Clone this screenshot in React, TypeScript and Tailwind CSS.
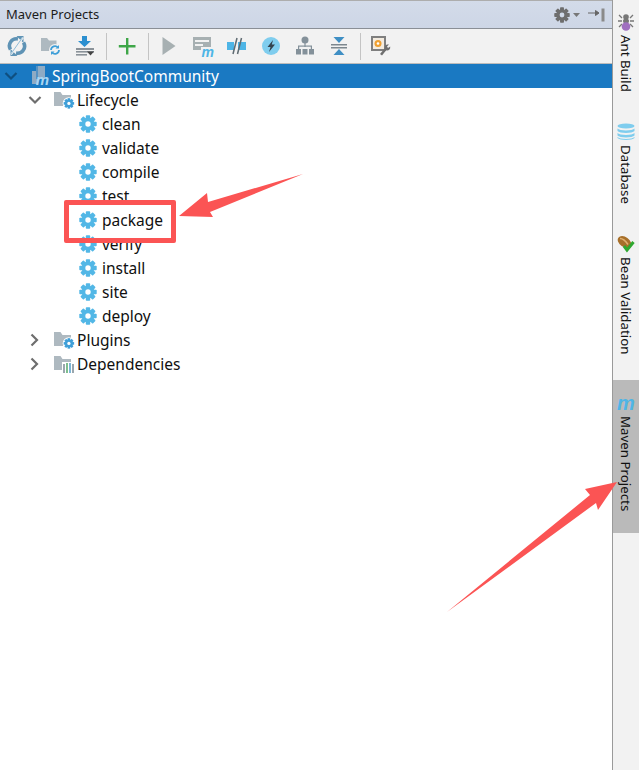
import type { ReactNode } from "react";

const FONT = "font-['Noto_Sans','Open_Sans',sans-serif]";

function Cog({ size = 18, color = "#52b7e6", hole = "#ffffff" }: { size?: number; color?: string; hole?: string }) {
  return (
    <svg width={size} height={size} viewBox="0 0 18 18" className="shrink-0">
      {[0, 45, 90, 135].map((a) => (
        <rect key={a} x="6.8" y="0.3" width="4.4" height="17.4" rx="0.8" fill={color} transform={`rotate(${a} 9 9)`} />
      ))}
      <circle cx="9" cy="9" r="6.4" fill={color} />
      <circle cx="9" cy="9" r="2.7" fill={hole} />
    </svg>
  );
}

function Folder({ children }: { children?: ReactNode }) {
  return (
    <svg width="21" height="18" viewBox="0 0 21 18" className="shrink-0">
      <path d="M0 1h6.5l2 3H17v11H0z" fill="#aeb9c0" />
      {children}
    </svg>
  );
}

function FolderCog() {
  return (
    <Folder>
      <circle cx="14.900" cy="12.400" r="6.200" fill="#fff" />
      <g transform="translate(9.5 7) scale(0.6)">
        {[0, 45, 90, 135].map((a) => (
          <rect key={a} x="6.8" y="0.3" width="4.4" height="17.4" fill="#3f9fd8" transform={`rotate(${a} 9 9)`} />
        ))}
        <circle cx="9" cy="9" r="6.4" fill="#3f9fd8" />
        <circle cx="9" cy="9" r="2.7" fill="#fff" />
      </g>
    </Folder>
  );
}

function FolderBars() {
  return (
    <Folder>
      <rect x="8" y="7" width="13" height="11" fill="#fff" />
      <rect x="9" y="9" width="2" height="9" fill="#9aa7ae" />
      <rect x="12" y="8" width="2" height="10" fill="#7fbf8e" />
      <rect x="15" y="8" width="2" height="10" fill="#7db7d8" />
      <rect x="18" y="9" width="2" height="9" fill="#9aa7ae" />
    </Folder>
  );
}

function Chevron({ open, color = "#6e6e6e" }: { open: boolean; color?: string }) {
  return (
    <svg width="14" height="14" viewBox="0 0 14 14" className="shrink-0">
      <path d={open ? "M1.5 4l5.5 5.5L12.5 4" : "M3.500 1.500L9 7l-5.500 5.500"} fill="none" stroke={color} strokeWidth="2.2" />
    </svg>
  );
}

function MavenM({ className = "", color = "#4eb5e6", size = 13 }: { className?: string; color?: string; size?: number }) {
  return (
    <span
      className={`font-['Liberation_Sans',sans-serif] font-bold italic leading-none ${className}`}
      style={{ color, fontSize: size }}
    >
      m
    </span>
  );
}

function ToolIcon({ name }: { name: string }) {
  switch (name) {
    case "refresh":
      return (
        <svg width="20" height="20" viewBox="0 0 20 20">
          <path d="M3.500 13.500A7 7 0 0 1 11 3" fill="none" stroke="#5f93b5" strokeWidth="3.600" />
          <path d="M16.500 6.500A7 7 0 0 1 9 17" fill="none" stroke="#5f93b5" strokeWidth="3.600" />
          <path d="M9.500 0h7v7zM10.500 20h-7v-7z" fill="#5f93b5" />
          <path d="M4 18.500L16 1.500" stroke="#f2f2f2" strokeWidth="2" />
          <path d="M3.500 18.500L15.500 1.500" stroke="#8fbcd8" strokeWidth="1" />
        </svg>
      );
    case "folderSync":
      return (
        <svg width="20" height="20" viewBox="0 0 20 20">
          <path d="M0 2h6l2 2.500h7.500V15H0z" fill="#aeb9c0" />
          <circle cx="14" cy="14" r="6" fill="#f2f2f2" />
          <path d="M10 14a4 4 0 0 1 7-2.500M18 14a4 4 0 0 1-7 2.500" fill="none" stroke="#3f9fd8" strokeWidth="1.8" />
          <path d="M18 9v3.500h-3.500zM10 19v-3.500h3.500z" fill="#3f9fd8" />
        </svg>
      );
    case "download":
      return (
        <svg width="20" height="20" viewBox="0 0 20 20">
          <path d="M7 0h5v5h4l-6.500 6L3 5h4z" fill="#2b8fd0" />
          <rect x="1" y="12" width="18" height="2" fill="#8a9299" />
          <rect x="1" y="15" width="18" height="1.600" fill="#8a9299" />
          <rect x="1" y="18" width="11" height="1.600" fill="#8a9299" />
          <path d="M12 15.500h7l-3.500 4z" fill="#444" />
        </svg>
      );
    case "plus":
      return (
        <svg width="18" height="18" viewBox="0 0 18 18">
          <path d="M8 1h2.400v7H17.500v2.400h-7.100v7H8v-7H.8V8H8z" fill="#3ea648" />
        </svg>
      );
    case "play":
      return (
        <svg width="16" height="20" viewBox="0 0 16 20">
          <path d="M1.500 1L14.500 10 1.500 19z" fill="#a7b0b2" />
        </svg>
      );
    case "runM":
      return (
        <span className="relative block h-[20px] w-[20px]">
          <svg width="20" height="20" viewBox="0 0 20 20" className="absolute left-0 top-0">
            <rect x="0" y="1" width="18" height="13" fill="#a7b0b2" />
            <rect x="2" y="4" width="14" height="2" fill="#f2f2f2" />
            <rect x="2" y="8" width="8" height="2" fill="#f2f2f2" />
            <rect x="8" y="11" width="12" height="9" fill="#f2f2f2" />
          </svg>
          <MavenM className="absolute bottom-[-3px] right-[-1px]" size={14} />
        </span>
      );
    case "skip":
      return (
        <svg width="20" height="20" viewBox="0 0 20 20">
          <rect x="0" y="6" width="7" height="8" fill="#4eb5e6" />
          <rect x="11" y="6" width="8" height="8" fill="#4eb5e6" />
          <path d="M6 18L10 2M10.500 18L14.500 2" stroke="#5f6b72" strokeWidth="1.500" />
        </svg>
      );
    case "bolt":
      return (
        <svg width="20" height="20" viewBox="0 0 20 20">
          <circle cx="10" cy="10" r="9" fill="#7fcdee" />
          <path d="M12 4L6.500 11h3L8 16l6-7.500h-3.200z" fill="#33424d" />
        </svg>
      );
    case "tree":
      return (
        <svg width="20" height="20" viewBox="0 0 20 20">
          <circle cx="10" cy="4" r="3.500" fill="#84919a" />
          <rect x="9.400" y="6" width="1.200" height="5" fill="#84919a" />
          <rect x="3" y="9.500" width="14" height="1.200" fill="#84919a" />
          <rect x="1" y="13" width="5" height="5.500" fill="#84919a" />
          <rect x="7.500" y="13" width="5" height="5.500" fill="#84919a" />
          <rect x="14" y="13" width="5" height="5.500" fill="#84919a" />
          <rect x="3" y="10" width="1.200" height="3" fill="#84919a" />
          <rect x="15.800" y="10" width="1.200" height="3" fill="#84919a" />
        </svg>
      );
    case "collapse":
      return (
        <svg width="18" height="20" viewBox="0 0 18 20">
          <path d="M3.500 1h11L9 7z" fill="#3f8fc4" />
          <path d="M3.500 19h11L9 13z" fill="#3f8fc4" />
          <rect x="1" y="8" width="16" height="1.500" fill="#7d878e" />
          <rect x="1" y="11" width="16" height="1.500" fill="#7d878e" />
        </svg>
      );
    default:
      return (
        <svg width="20" height="20" viewBox="0 0 20 20">
          <rect x="1" y="1" width="13" height="13" fill="#f4ece0" stroke="#7f7f7f" strokeWidth="2" />
          <circle cx="7" cy="7.500" r="3.500" fill="#f0a030" />
          <circle cx="7" cy="7.500" r="1.300" fill="#fff" />
          <path d="M9 18l5-6c-1-2 1-4 4-3.500l-2 2 1 1.500 2.200-1.500c.5 3-2 4.500-4 3.800L11 19.500z" fill="#6f6f6f" />
        </svg>
      );
  }
}

function Sep() {
  return <div className="ml-[4px] mr-[3px] h-[27px] w-px bg-[#c4c4c4]" />;
}

function Tool({ name }: { name: string }) {
  return (
    <div className="flex w-[34px] items-center justify-center">
      <ToolIcon name={name} />
    </div>
  );
}

function Phase({ label }: { label: string }) {
  return (
    <div className="flex h-[24px] items-center pl-[79px] text-[#101010]">
      <Cog />
      <span className="ml-[5px]">{label}</span>
    </div>
  );
}

function Group({ open, label, icon }: { open: boolean; label: string; icon: ReactNode }) {
  return (
    <div className="flex h-[24px] items-center pl-[28px] text-[#101010]">
      <Chevron open={open} />
      <span className="ml-[12px] flex">{icon}</span>
      <span className="ml-[2px]">{label}</span>
    </div>
  );
}

function SideTab({ label, icon, active, className }: { label: string; icon: ReactNode; active?: boolean; className: string }) {
  return (
    <div className={`flex w-full flex-col items-center ${active ? "bg-[#bababa]" : ""} ${className}`}>
      <div className="flex h-[18px] items-center justify-center">{icon}</div>
      <span className="mt-[4px] text-[13.3px] leading-[18px] text-[#111] [writing-mode:vertical-rl]">{label}</span>
    </div>
  );
}

const AntIcon = (
  <svg width="16" height="18" viewBox="0 0 16 18">
    <path d="M1 2l3 3M15 2l-3 3M0 8h4M16 8h-4M1 14l3-3M15 14l-3-3" stroke="#777" strokeWidth="1.300" />
    <circle cx="8" cy="4" r="2.800" fill="#777" />
    <ellipse cx="8" cy="8" rx="3" ry="2.500" fill="#777" />
    <ellipse cx="8" cy="13.500" rx="4.300" ry="4.300" fill="#a070c0" />
  </svg>
);

const DbIcon = (
  <svg width="18" height="18" viewBox="0 0 18 18">
    <ellipse cx="9" cy="3" rx="8.500" ry="2.600" fill="#7fcdee" />
    <path d="M.5 5.500c2 2.500 15 2.500 17 0V8c-2 2.500-15 2.500-17 0z" fill="#7fcdee" />
    <path d="M.5 10c2 2.500 15 2.500 17 0v2.500c-2 2.500-15 2.500-17 0z" fill="#7fcdee" />
    <path d="M.5 14c2 2.500 15 2.500 17 0v1c-2 2.500-15 2.500-17 0z" fill="#7fcdee" />
  </svg>
);

const BeanIcon = (
  <svg width="18" height="18" viewBox="0 0 18 18">
    <ellipse cx="7.500" cy="7" rx="7.500" ry="5" transform="rotate(35 7.500 7)" fill="#a8702a" />
    <path d="M3 3.500c3 0 6 3 8 6" fill="none" stroke="#e0b070" strokeWidth="1.500" />
    <path d="M7 11l3 4 6.500-8" fill="none" stroke="#2fa82f" strokeWidth="3" />
  </svg>
);

export default function App() {
  return (
    <div className={`relative flex h-[770px] w-[639px] overflow-hidden bg-white text-[15.5px] ${FONT}`}>
      <div className="flex min-w-0 flex-1 flex-col">
        <div className="flex h-[29px] items-center justify-between border-y-[1px] border-t-[#adadad] border-b-[#8a8f96] bg-gradient-to-b from-[#d3dbe9] to-[#cdd6e6] pl-[6px] pr-[6px]">
          <span className="text-[13px] text-[#1c1c1c]">Maven Projects</span>
          <div className="flex items-center">
            <Cog size={16} color="#6e6e6e" hole="#d0d9e8" />
            <svg width="9" height="6" viewBox="0 0 9 6" className="ml-[2px] mr-[7px]">
              <path d="M1 1h7L4.500 5z" fill="#777" />
            </svg>
            <svg width="18" height="14" viewBox="0 0 18 14">
              <path d="M0 5h10M7.500 2.500L11 5 7.500 7.500z" stroke="#666" fill="#666" strokeWidth="1" />
              <rect x="13.500" y="0.500" width="3" height="13" fill="#8a8a8a" />
            </svg>
          </div>
        </div>

        <div className="flex h-[35px] items-center border-b-[1px] border-[#bcbcbc] bg-[#f2f2f2]">
          <Tool name="refresh" />
          <Tool name="folderSync" />
          <Tool name="download" />
          <Sep />
          <Tool name="plus" />
          <Sep />
          <Tool name="play" />
          <Tool name="runM" />
          <Tool name="skip" />
          <Tool name="bolt" />
          <Tool name="tree" />
          <Tool name="collapse" />
          <Sep />
          <Tool name="settings" />
        </div>

        <div className="leading-[24px]">
          <div className="flex h-[24px] items-center bg-[#1a79c2] pl-[4px] text-white">
            <Chevron open color="#0f4f80" />
            <span className="relative ml-[14px] block h-[20px] w-[18px]">
              <svg width="13" height="18" viewBox="0 0 13 18" className="absolute left-0 top-0">
                <path d="M0 5h4V0h9v13H6v5H0z" fill="#8fabc4" />
                <path d="M5 0v13" stroke="#1a79c2" strokeWidth="1" />
              </svg>
              <MavenM className="absolute bottom-[-1px] right-[1px]" color="#a9d6f2" size={15} />
            </span>
            <span className="ml-[2px]">SpringBootCommunity</span>
          </div>
          <Group open label="Lifecycle" icon={<FolderCog />} />
          {["clean", "validate", "compile", "test", "package", "verify", "install", "site", "deploy"].map((p) => (
            <Phase key={p} label={p} />
          ))}
          <Group open={false} label="Plugins" icon={<FolderCog />} />
          <Group open={false} label="Dependencies" icon={<FolderBars />} />
        </div>
      </div>

      <div className="flex h-full w-[27px] shrink-0 flex-col border-l-[1px] border-[#9a9a9a] bg-[#f2f2f2]">
        <SideTab label="Ant Build" icon={AntIcon} className="mt-[13px]" />
        <SideTab label="Database" icon={DbIcon} className="mt-[31px]" />
        <SideTab label="Bean Validation" icon={BeanIcon} className="mt-[31px]" />
        <SideTab label="Maven Projects" icon={<MavenM size={20} />} active className="mt-[26px] h-[153px] pt-[14px]" />
      </div>

      {/* red annotations drawn over the panel */}
      <div className="absolute left-[64px] top-[200px] h-[43px] w-[112px] rounded-[2px] border-[5px] border-[#fb5454]" />
      <svg width="639" height="770" viewBox="0 0 639 770" className="pointer-events-none absolute left-0 top-0">
        <path d="M179 216L207 193 208 202 303 174 210 212 213 217z" fill="#fb5454" />
        <path d="M617 482L585 489 590 495 447 612 596 503 598 510z" fill="#fb5454" />
      </svg>
    </div>
  );
}
